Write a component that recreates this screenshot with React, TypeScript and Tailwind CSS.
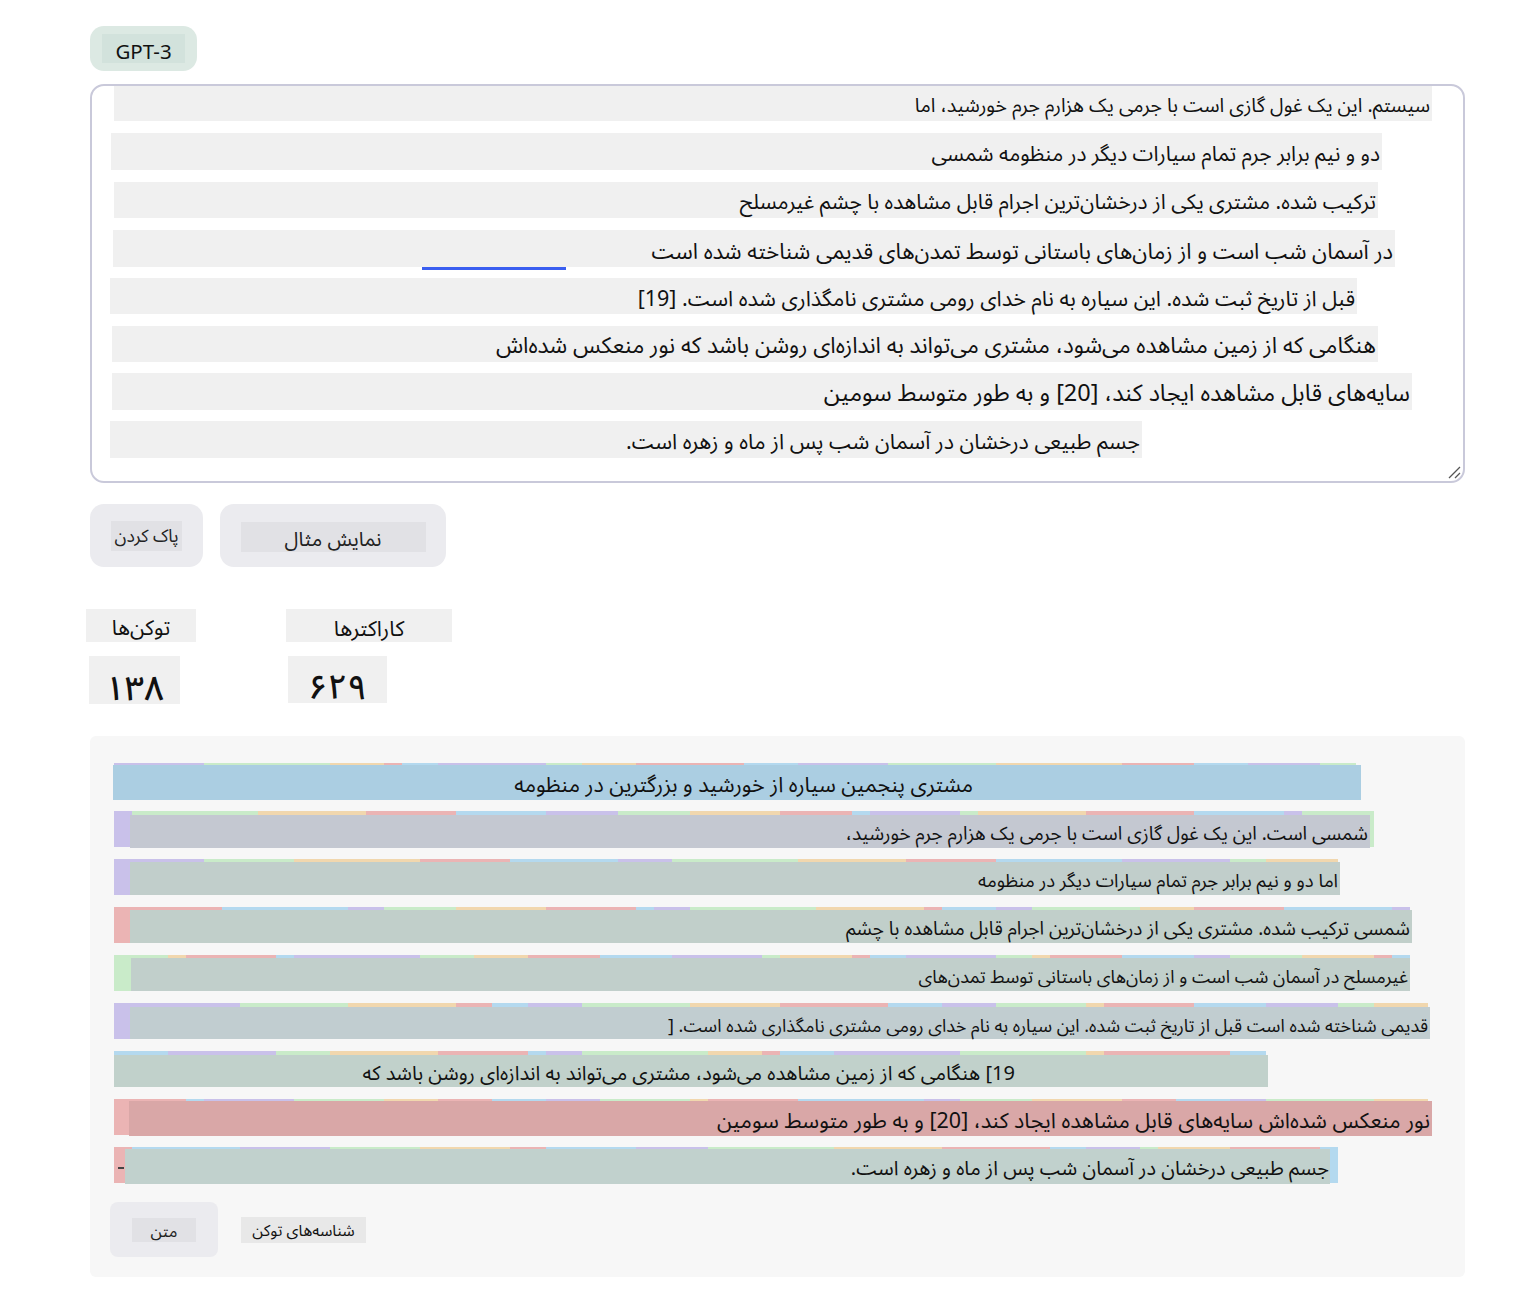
import React from "react";

const SEG = ["#c9c1ea", "#c9ebc9", "#f1d7ae", "#ebb4b4", "#b4d9ef"];

function segments(start: number, total: number, seed: number) {
  const out: { w: number; c: string }[] = [];
  let x = 0;
  let i = start;
  let s = seed;
  while (x < total) {
    s = (s * 9301 + 49297) % 233280;
    let w = 18 * (1 + Math.floor((s / 233280) * 7));
    if (x + w > total) w = total - x;
    out.push({ w, c: SEG[i % 5] });
    x += w;
    i++;
  }
  return out;
}

const inputLines = [
  { cls: "mt-0 ml-[22px] w-[1318px] h-[35px] text-[19.5px]", text: "سیستم. این یک غول گازی است با جرمی یک هزارم جرم خورشید، اما" },
  { cls: "mt-[12px] ml-[19px] w-[1271px] h-[37px] text-[21px]", text: "دو و نیم برابر جرم تمام سیارات دیگر در منظومه شمسی" },
  { cls: "mt-[12px] ml-[22px] w-[1264px] h-[36px] text-[21px]", text: "ترکیب شده. مشتری یکی از درخشان‌ترین اجرام قابل مشاهده با چشم غیرمسلح" },
  { cls: "mt-[12px] ml-[21px] w-[1282px] h-[37px] text-[22px]", text: "در آسمان شب است و از زمان‌های باستانی توسط تمدن‌های قدیمی شناخته شده است", underline: true },
  { cls: "mt-[11px] ml-[18px] w-[1247px] h-[36px] text-[21.5px]", text: "قبل از تاریخ ثبت شده. این سیاره به نام خدای رومی مشتری نامگذاری شده است. [19]" },
  { cls: "mt-[12px] ml-[20px] w-[1266px] h-[36px] text-[22.5px]", text: "هنگامی که از زمین مشاهده می‌شود، مشتری می‌تواند به اندازه‌ای روشن باشد که نور منعکس شده‌اش" },
  { cls: "mt-[11px] ml-[20px] w-[1300px] h-[37px] text-[23.5px]", text: "سایه‌های قابل مشاهده ایجاد کند، [20] و به طور متوسط سومین" },
  { cls: "mt-[11px] ml-[18px] w-[1032px] h-[37px] text-[21.5px]", text: "جسم طبیعی درخشان در آسمان شب پس از ماه و زهره است." },
];

const tokenRows = [
  { start: 0, seed: 11, w: 1242, box: "w-[1242px]", ov: "left-[-1px] top-[2px] w-[1248px] h-[35px] bg-[#abcee2] pr-[388px] text-[21.5px]", text: "مشتری پنجمین سیاره از خورشید و بزرگترین در منظومه" },
  { start: 0, seed: 23, w: 1260, box: "w-[1260px]", ov: "left-[16px] top-[4px] w-[1240px] h-[33px] bg-[#c4c8d1] pr-[2px] text-[19px]", text: "شمسی است. این یک غول گازی است با جرمی یک هزارم جرم خورشید،" },
  { start: 0, seed: 37, w: 1224, box: "w-[1224px]", ov: "left-[16px] top-[3px] w-[1210px] h-[33px] bg-[#c1cecb] pr-[2px] text-[18.5px]", text: "اما دو و نیم برابر جرم تمام سیارات دیگر در منظومه" },
  { start: 3, seed: 41, w: 1296, box: "w-[1296px]", ov: "left-[16px] top-[3px] w-[1282px] h-[33px] bg-[#c1cfca] pr-[2px] text-[19px]", text: "شمسی ترکیب شده. مشتری یکی از درخشان‌ترین اجرام قابل مشاهده با چشم" },
  { start: 1, seed: 53, w: 1296, box: "w-[1296px]", ov: "left-[17px] top-[3px] w-[1279px] h-[33px] bg-[#c1cfcb] pr-[2px] text-[18px]", text: "غیرمسلح در آسمان شب است و از زمان‌های باستانی توسط تمدن‌های" },
  { start: 0, seed: 67, w: 1314, box: "w-[1314px]", ov: "left-[16px] top-[4px] w-[1300px] h-[32px] bg-[#c1cdd0] pr-[2px] text-[18px]", text: "قدیمی شناخته شده است قبل از تاریخ ثبت شده. این سیاره به نام خدای رومی مشتری نامگذاری شده است. [" },
  { start: 4, seed: 79, w: 1152, box: "w-[1152px]", ov: "left-0 top-[4px] w-[1154px] h-[32px] bg-[#c1d1cb] pr-[253px] text-[20px]", text: "19] هنگامی که از زمین مشاهده می‌شود، مشتری می‌تواند به اندازه‌ای روشن باشد که" },
  { start: 3, seed: 83, w: 1314, box: "w-[1314px]", ov: "left-[15px] top-[2px] w-[1303px] h-[35px] bg-[#d9a7a7] pr-[2px] text-[21.5px]", text: "نور منعکس شده‌اش سایه‌های قابل مشاهده ایجاد کند، [20] و به طور متوسط سومین" },
  { start: 3, seed: 97, w: 1224, box: "w-[1224px]", ov: "left-[11px] top-[2px] w-[1205px] h-[35px] bg-[#c1d1cd] pr-[1px] text-[20px]", text: "جسم طبیعی درخشان در آسمان شب پس از ماه و زهره است.", dash: true },
];

function TokenRow({ row }: { row: (typeof tokenRows)[number] }) {
  const segs = segments(row.start, row.w, row.seed);
  return (
    <div className={`relative flex h-[36px] ${row.box}`}>
      {segs.map((s, i) => (
        <div key={i} className="h-full shrink-0" style={{ width: s.w, background: s.c }} />
      ))}
      {row.dash && <div className="absolute left-[4px] top-[20px] h-[2px] w-[6px] bg-[#444]" />}
      <div
        dir="rtl"
        className={`absolute flex items-center pt-[3px] text-right leading-none text-[#111] whitespace-nowrap ${row.ov}`}
      >
        {row.text}
      </div>
    </div>
  );
}

export default function App() {
  return (
    <div className="min-h-[1292px] bg-white font-['Noto_Sans','Noto_Sans_Arabic','Noto_Naskh_Arabic','DejaVu_Sans',sans-serif] text-[#111]">
      <div className="w-[1465px] pl-[90px] pt-[26px]">
        {/* Model pill */}
        <div className="flex h-[45px] w-[107px] items-center justify-center rounded-[14px] bg-[#dce9e3]">
          <div className="flex h-[29px] w-[83px] items-end justify-center bg-[#d2e2dc] pt-[6px] text-[20.5px] leading-[23px] text-[#111]">
            GPT-3
          </div>
        </div>

        {/* Text input */}
        <div className="relative mt-[13px] h-[399px] rounded-[14px] border-2 border-[#c9c9da] bg-white">
          {inputLines.map((l, i) => (
            <div key={i} className={`relative ${l.cls}`}>
              <div
                dir="rtl"
                className="flex h-full items-center bg-[#f0f0f0] pr-[2px] pt-[3px] leading-none whitespace-nowrap text-[#111]"
              >
                {l.text}
              </div>
              {l.underline && <div className="absolute left-[309px] top-full h-[3px] w-[144px] bg-[#3a5ef0]" />}
            </div>
          ))}
          <svg className="absolute bottom-[2px] right-[2px]" width="16" height="16" viewBox="0 0 16 16">
            <path d="M15 4 L4 15 M15 10 L10 15" stroke="#555" strokeWidth="1.3" />
          </svg>
        </div>

        {/* Buttons */}
        <div className="mt-[21px] flex gap-[17px]">
          <button className="flex h-[63px] w-[113px] items-center justify-center rounded-[14px] bg-[#ebebef]">
            <span className="flex h-[30px] w-[71px] items-center justify-center whitespace-nowrap bg-[#e1e1e5] text-[17.5px] leading-none text-[#222]">
              پاک کردن
            </span>
          </button>
          <button className="flex h-[63px] w-[226px] items-center justify-center rounded-[14px] bg-[#ebebef]">
            <span className="mt-[3px] flex h-[30px] w-[185px] items-center justify-center bg-[#e1e1e5] pt-[4px] text-[20px] leading-none text-[#222]">
              نمایش مثال
            </span>
          </button>
        </div>

        {/* Stats */}
        <div className="mt-[42px] flex">
          <div className="-ml-[4px] w-[200px]">
            <div className="flex h-[33px] w-[110px] items-center justify-center bg-[#f0f0f0] pt-[4px] text-[21px] leading-none">
              توکن‌ها
            </div>
            <div className="ml-[3px] mt-[14px] flex h-[48px] w-[91px] items-end justify-center bg-[#f0f0f0] text-[34px] font-medium leading-none">
              ۱۳۸
            </div>
          </div>
          <div>
            <div className="flex h-[33px] w-[166px] items-center justify-center bg-[#f0f0f0] pt-[4px] text-[21.5px] leading-none">
              کاراکترها
            </div>
            <div className="ml-[2px] mt-[14px] flex h-[47px] w-[99px] items-end justify-center bg-[#f0f0f0] text-[34px] font-medium leading-none">
              ۶۲۹
            </div>
          </div>
        </div>

        {/* Tokenized output */}
        <div className="mt-[32px] flex h-[541px] flex-col rounded-[6px] bg-[#f7f7f7] pl-[24px] pt-[27px]">
          <div className="flex flex-col gap-[12px]">
            {tokenRows.map((r, i) => (
              <TokenRow key={i} row={r} />
            ))}
          </div>
          <div className="mt-[19px] flex items-center gap-[23px]">
            <button className="-ml-[4px] flex h-[55px] w-[108px] items-center justify-center rounded-[8px] bg-[#ebebef]">
              <span className="flex h-[24px] w-[64px] items-center justify-center bg-[#e1e1e5] pt-[3px] text-[16.5px] leading-none text-[#222]">
                متن
              </span>
            </button>
            <span className="flex h-[26px] w-[125px] items-center justify-center whitespace-nowrap bg-[#e8e8e8] pt-[2px] text-[15.8px] leading-none text-[#111]">
              شناسه‌های توکن
            </span>
          </div>
        </div>
      </div>
    </div>
  );
}
